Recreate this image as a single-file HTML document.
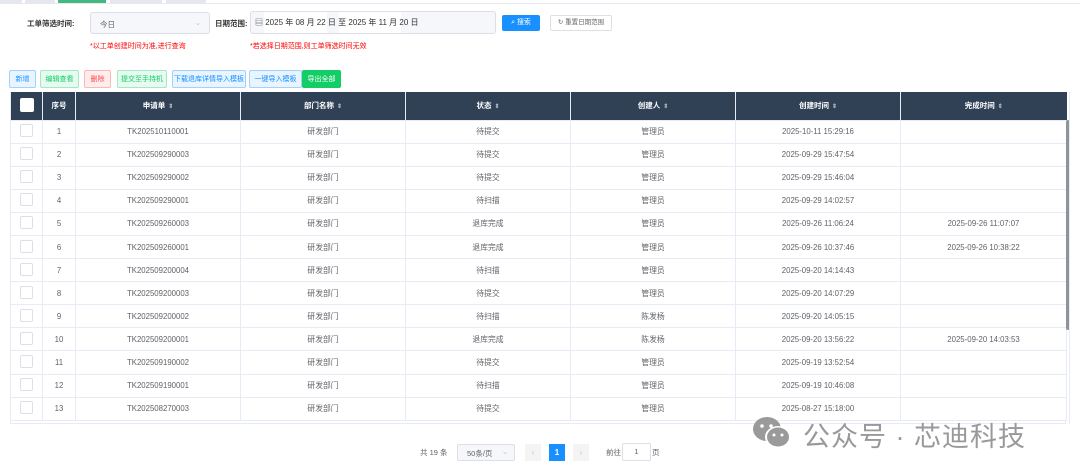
<!DOCTYPE html>
<html><head><meta charset="utf-8"><style>
*{box-sizing:border-box;margin:0;padding:0}
body{width:1080px;height:475px;background:#fff;font-family:"Liberation Sans","Noto Sans CJK SC",sans-serif;font-size:8px;color:#606266;position:relative;overflow:hidden}
.a{position:absolute}
.tab{position:absolute;top:0;height:3px;background:#e4e7ed}
.btn{position:absolute;top:70px;height:18px;border:1px solid;border-radius:2px;font-size:7px;display:flex;align-items:center;justify-content:center}
table{position:absolute;left:10px;top:92px;border-collapse:collapse;table-layout:fixed;width:1056px}
th{background:#304156;color:#fff;height:28px;font-size:7.5px;font-weight:bold;border-left:1px solid #e6ebf5;text-align:center}
td{height:23.1px;border:1px solid #e6ebf5;text-align:center;font-size:7.8px;color:#606266}
.cb{display:inline-block;width:13px;height:13px;border:1px solid #dcdfe6;border-radius:2px;background:#fff}
.s{font-size:6px;color:#c0c4cc;margin-left:3px}
</style></head><body>
<div class="tab" style="left:0;width:22px"></div>
<div class="tab" style="left:25px;width:30px"></div>
<div class="tab" style="left:58px;width:48px;background:#42b983"></div>
<div class="tab" style="left:110px;width:52px"></div>
<div class="tab" style="left:166px;width:40px"></div>
<div class="a" style="left:0;top:3px;width:1080px;height:1px;background:#e8e8ee"></div>

<div class="a" style="left:27px;top:18px;font-size:7.5px;color:#333;font-weight:bold">工单筛选时间:</div>
<div class="a" style="left:90px;top:12px;width:120px;height:22px;border:1px solid #dcdfe6;border-radius:3px;background:#f5f7fa;font-size:7.5px;padding:6px 0 0 9px">今日<span style="position:absolute;right:8px;top:5px;color:#c0c4cc">⌄</span></div>
<div class="a" style="left:90px;top:41px;color:#f00;font-size:7px">*以工单创建时间为准,进行查询</div>
<div class="a" style="left:215px;top:18px;font-size:7.5px;color:#333;font-weight:bold">日期范围:</div>
<div class="a" style="left:250px;top:11px;width:246px;height:23px;border:1px solid #dcdfe6;border-radius:3px;background:#f5f7fa"></div>
<div class="a" style="left:264px;top:12px;width:63px;height:21px;background:#fff"></div>
<div class="a" style="left:339px;top:12px;width:62px;height:21px;background:#fff"></div>
<div class="a" style="left:255px;top:17px;font-size:8px;color:#333">▤ 2025 年 08 月 22 日 至 2025 年 11 月 20 日</div>
<div class="a" style="left:250px;top:41px;color:#f00;font-size:7px">*若选择日期范围,则工单筛选时间无效</div>
<div class="a" style="left:502px;top:15px;width:38px;height:16px;background:#1890ff;border-radius:2px;color:#fff;font-size:7px;text-align:center;line-height:16px">⌕ 搜索</div>
<div class="a" style="left:550px;top:15px;width:62px;height:16px;border:1px solid #dcdfe6;border-radius:2px;color:#666;font-size:6.5px;text-align:center;line-height:14px">↻ 重置日期范围</div>

<div class="btn" style="left:9px;width:27px;background:#e8f4ff;border-color:#a3d0fd;color:#1890ff">新增</div>
<div class="btn" style="left:40px;width:39px;background:#e7faf0;border-color:#a3e9c4;color:#13ce66">编辑查看</div>
<div class="btn" style="left:84px;width:27px;background:#ffeded;border-color:#ffb6b6;color:#ff4949">删除</div>
<div class="btn" style="left:117px;width:50px;background:#e7faf0;border-color:#a3e9c4;color:#13ce66">提交至手持机</div>
<div class="btn" style="left:172px;width:74px;background:#e8f4ff;border-color:#a3d0fd;color:#1890ff">下载退库详情导入模板</div>
<div class="btn" style="left:249px;width:53px;background:#e8f4ff;border-color:#a3d0fd;color:#1890ff">一键导入模板</div>
<div class="btn" style="left:302px;width:39px;background:#13ce66;border-color:#13ce66;color:#fff">导出全部</div>

<table>
<colgroup><col style="width:32px"><col style="width:33px"><col style="width:165px"><col style="width:165px"><col style="width:165px"><col style="width:165px"><col style="width:165px"><col style="width:166px"></colgroup>
<tr><th><span class="cb" style="width:14px;height:14px;border-color:#fff"></span></th><th>序号</th><th>申请单<span class="s">⇕</span></th><th>部门名称<span class="s">⇕</span></th><th>状态<span class="s">⇕</span></th><th>创建人<span class="s">⇕</span></th><th>创建时间<span class="s">⇕</span></th><th>完成时间<span class="s">⇕</span></th></tr>
<tr><td><span class="cb"></span></td><td>1</td><td>TK202510110001</td><td>研发部门</td><td>待提交</td><td>管理员</td><td>2025-10-11 15:29:16</td><td></td></tr>
<tr><td><span class="cb"></span></td><td>2</td><td>TK202509290003</td><td>研发部门</td><td>待提交</td><td>管理员</td><td>2025-09-29 15:47:54</td><td></td></tr>
<tr><td><span class="cb"></span></td><td>3</td><td>TK202509290002</td><td>研发部门</td><td>待提交</td><td>管理员</td><td>2025-09-29 15:46:04</td><td></td></tr>
<tr><td><span class="cb"></span></td><td>4</td><td>TK202509290001</td><td>研发部门</td><td>待扫描</td><td>管理员</td><td>2025-09-29 14:02:57</td><td></td></tr>
<tr><td><span class="cb"></span></td><td>5</td><td>TK202509260003</td><td>研发部门</td><td>退库完成</td><td>管理员</td><td>2025-09-26 11:06:24</td><td>2025-09-26 11:07:07</td></tr>
<tr><td><span class="cb"></span></td><td>6</td><td>TK202509260001</td><td>研发部门</td><td>退库完成</td><td>管理员</td><td>2025-09-26 10:37:46</td><td>2025-09-26 10:38:22</td></tr>
<tr><td><span class="cb"></span></td><td>7</td><td>TK202509200004</td><td>研发部门</td><td>待扫描</td><td>管理员</td><td>2025-09-20 14:14:43</td><td></td></tr>
<tr><td><span class="cb"></span></td><td>8</td><td>TK202509200003</td><td>研发部门</td><td>待提交</td><td>管理员</td><td>2025-09-20 14:07:29</td><td></td></tr>
<tr><td><span class="cb"></span></td><td>9</td><td>TK202509200002</td><td>研发部门</td><td>待扫描</td><td>陈发杨</td><td>2025-09-20 14:05:15</td><td></td></tr>
<tr><td><span class="cb"></span></td><td>10</td><td>TK202509200001</td><td>研发部门</td><td>退库完成</td><td>陈发杨</td><td>2025-09-20 13:56:22</td><td>2025-09-20 14:03:53</td></tr>
<tr><td><span class="cb"></span></td><td>11</td><td>TK202509190002</td><td>研发部门</td><td>待提交</td><td>管理员</td><td>2025-09-19 13:52:54</td><td></td></tr>
<tr><td><span class="cb"></span></td><td>12</td><td>TK202509190001</td><td>研发部门</td><td>待扫描</td><td>管理员</td><td>2025-09-19 10:46:08</td><td></td></tr>
<tr><td><span class="cb"></span></td><td>13</td><td>TK202508270003</td><td>研发部门</td><td>待提交</td><td>管理员</td><td>2025-08-27 15:18:00</td><td></td></tr>
</table>
<div class="a" style="left:0;top:421px;width:1080px;height:54px;background:#fff"></div>
<div class="a" style="left:10px;top:420px;width:1056px;height:4px;border-left:1px solid #e6ebf5;border-right:1px solid #e6ebf5;border-bottom:1px solid #e6ebf5"></div>
<div class="a" style="left:1066px;top:120px;width:4px;height:210px;background:#909399;border-radius:2px"></div>
<div class="a" style="left:1066px;top:92px;width:4px;height:332px;border-right:1px solid #e6ebf5"></div>

<div class="a" style="left:420px;top:447px;font-size:7.5px">共 19 条</div>
<div class="a" style="left:457px;top:444px;width:58px;height:17px;border:1px solid #dcdfe6;border-radius:2px;background:#f5f7fa;font-size:7.5px;padding:3px 0 0 9px">50条/页<span style="position:absolute;right:6px;top:2px;color:#c0c4cc">⌄</span></div>
<div class="a" style="left:525px;top:444px;width:16px;height:17px;background:#f4f4f5;color:#c0c4cc;text-align:center;line-height:17px">‹</div>
<div class="a" style="left:549px;top:444px;width:16px;height:17px;background:#1890ff;color:#fff;text-align:center;line-height:17px;font-weight:bold">1</div>
<div class="a" style="left:573px;top:444px;width:16px;height:17px;background:#f4f4f5;color:#c0c4cc;text-align:center;line-height:17px">›</div>
<div class="a" style="left:606px;top:447px;font-size:7.5px">前往</div>
<div class="a" style="left:622px;top:443px;width:29px;height:18px;border:1px solid #dcdfe6;border-radius:2px;text-align:center;line-height:16px;font-size:7.5px">1</div>
<div class="a" style="left:652px;top:447px;font-size:7.5px">页</div>

<div class="a" style="left:750px;top:414px;width:46px;height:36px">
<svg width="46" height="36" viewBox="0 0 46 36"><ellipse cx="17" cy="15" rx="14" ry="12" fill="#9a9a9a"/><ellipse cx="28" cy="23" rx="13" ry="11" fill="#fff"/><ellipse cx="28" cy="23" rx="11" ry="9.5" fill="#9a9a9a"/><circle cx="12" cy="12" r="1.8" fill="#fff"/><circle cx="21" cy="12" r="1.8" fill="#fff"/><circle cx="24" cy="21" r="1.5" fill="#fff"/><circle cx="32" cy="21" r="1.5" fill="#fff"/></svg></div>
<div class="a" style="left:803px;top:415px;font-size:27px;color:#999;letter-spacing:1px">公众号 · 芯迪科技</div>
</body></html>
